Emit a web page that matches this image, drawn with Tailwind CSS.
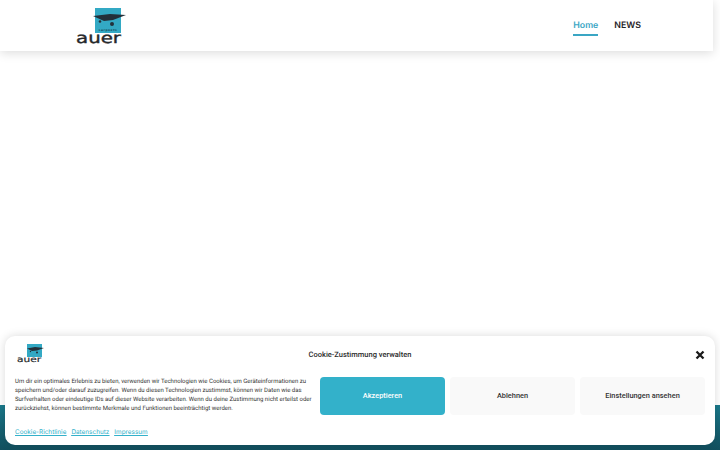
<!DOCTYPE html>
<html lang="de">
<head>
  <meta charset="UTF-8" />
  <meta name="viewport" content="width=device-width, initial-scale=1.0"/>
  <title>Auer</title>
  <script src="https://cdn.jsdelivr.net/npm/@tailwindcss/browser@4"></script>
</head>
<body class="relative h-[450px] w-[720px] overflow-hidden bg-white font-['Roboto',sans-serif] [text-rendering:geometricPrecision]">

  <div class="flex h-[450px] flex-col">
    <!-- header -->
    <header class="flex h-[51px] w-[713px] items-start justify-between bg-white pl-[76px] pr-[72px] shadow-[0_2px_10px_rgba(0,0,0,0.14)]">
      <svg class="mt-[8px]" width="52" height="38" viewBox="0 0 52 38">
        <rect x="19" y="0" width="26" height="25" fill="#33a9c4"/>
        <path d="M17 8 L34 6 L50 7 L37 12 L28 13 Z" fill="#23303a"/>
        <circle cx="24" cy="13.5" r="1.3" fill="#23303a"/>
        <circle cx="36" cy="16" r="2" fill="#23303a"/>
        <text x="32" y="23" text-anchor="middle" font-family="'DejaVu Sans'" font-size="3" font-weight="700" letter-spacing="0.5" fill="#16505f">sarpoets</text>
        <text x="0" y="35" font-family="'DejaVu Sans'" font-size="15" stroke="#26282b" stroke-width="0.4" textLength="45" lengthAdjust="spacingAndGlyphs" fill="#26282b">auer</text>
      </svg>
      <nav class="flex gap-4 pt-[20px] font-['Inter',sans-serif] text-[8.8px] font-semibold leading-[12px]">
        <a class="h-[16px] border-b-2 border-[#3aa6c4] text-[#3aa6c4]">Home</a>
        <a class="text-[#1f2328]">NEWS</a>
      </nav>
    </header>
    <main class="flex-1"></main>
    <footer class="h-[45px] bg-gradient-to-b from-[#1b7a8c] to-[#124f5e]"></footer>
  </div>

  <!-- cookie dialog -->
  <div class="absolute left-[5px] top-[336px] flex h-[109px] w-[710px] flex-col rounded-[10px] bg-white px-[10px] shadow-[0_0_10px_rgba(0,0,0,0.15)]">
    <div class="grid h-[36px] grid-cols-[1fr_auto_1fr] items-start pt-[8px]">
      <svg class="ml-[2px]" width="28" height="22" viewBox="0 0 28 22">
        <rect x="10" y="0" width="15" height="13" fill="#33a9c4"/>
        <path d="M10 4.5 L18 3 L27 4 L20 6.5 L15 7 Z" fill="#23303a"/>
        <circle cx="13.5" cy="7.5" r="0.7" fill="#23303a"/>
        <circle cx="20" cy="8.5" r="1" fill="#23303a"/>
        <text x="0" y="18" font-family="'DejaVu Sans'" font-size="8" stroke="#26282b" stroke-width="0.2" textLength="24" lengthAdjust="spacingAndGlyphs" fill="#26282b">auer</text>
      </svg>
      <h2 class="pt-[5px] text-[7.5px] font-medium leading-[12px] text-[#2b2b2b]">Cookie-Zustimmung verwalten</h2>
      <svg class="mt-[6px] justify-self-end" width="10" height="10" viewBox="0 0 10 10"><path d="M1.5 1.5 L8.5 8.5 M8.5 1.5 L1.5 8.5" stroke="#1a1a1a" stroke-width="2.3"/></svg>
    </div>
    <div class="mt-[5px] flex h-[38px] items-start gap-[5px]">
      <p class="w-[300px] text-[6px] leading-[9px] text-[#333]">Um dir ein optimales Erlebnis zu bieten, verwenden wir Technologien wie Cookies, um Geräteinformationen zu speichern und/oder darauf zuzugreifen. Wenn du diesen Technologien zustimmst, können wir Daten wie das Surfverhalten oder eindeutige IDs auf dieser Website verarbeiten. Wenn du deine Zustimmung nicht erteilst oder zurückziehst, können bestimmte Merkmale und Funktionen beeinträchtigt werden.</p>
      <button class="h-[38px] w-[125px] rounded bg-[#33b1ca] text-[7.4px] font-medium text-white">Akzeptieren</button>
      <button class="h-[38px] w-[125px] rounded bg-[#f9f9f9] text-[7.4px] font-medium text-[#333]">Ablehnen</button>
      <button class="h-[38px] w-[125px] rounded bg-[#f9f9f9] text-[7.4px] font-medium text-[#333]">Einstellungen ansehen</button>
    </div>
    <div class="mt-[13px] flex gap-[5px] font-['Inter',sans-serif] text-[6.4px] leading-[9px] text-[#33b1ca] underline">
      <a>Cookie-Richtlinie</a>
      <a>Datenschutz</a>
      <a>Impressum</a>
    </div>
  </div>

</body>
</html>
